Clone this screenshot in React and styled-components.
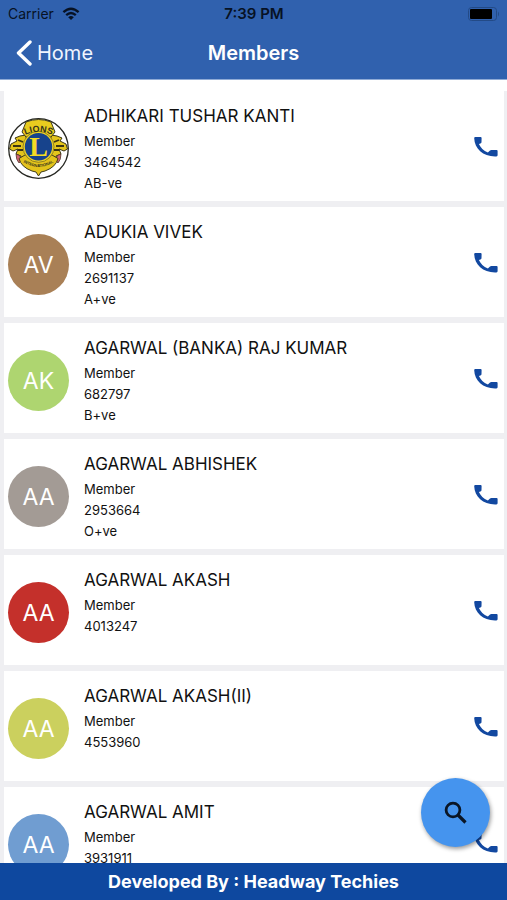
import React from "react";
import styled, { createGlobalStyle } from "styled-components";

const members = [
  { name: "ADHIKARI TUSHAR KANTI", id: "3464542", blood: "AB-ve", emblem: true },
  { name: "ADUKIA VIVEK", id: "2691137", blood: "A+ve", initials: "AV", color: "#a98056" },
  { name: "AGARWAL (BANKA) RAJ KUMAR", id: "682797", blood: "B+ve", initials: "AK", color: "#aed570" },
  { name: "AGARWAL ABHISHEK", id: "2953664", blood: "O+ve", initials: "AA", color: "#a39b95" },
  { name: "AGARWAL AKASH", id: "4013247", initials: "AA", color: "#c4302b" },
  { name: "AGARWAL AKASH(II)", id: "4553960", initials: "AA", color: "#cbd05e" },
  { name: "AGARWAL AMIT", id: "3931911", initials: "AA", color: "#709dd1" },
];

const GlobalStyle = createGlobalStyle`
  * { box-sizing: border-box; }
  body { margin: 0; background: #fff; font-family: Inter, "Liberation Sans", sans-serif; color: #111; }
  button { font: inherit; border: 0; padding: 0; background: none; cursor: pointer; }
`;

const Screen = styled.div`
  height: 100vh;
  display: flex;
  flex-direction: column;
`;

const Header = styled.header`
  flex: none;
  background: #3061ae;
  border-bottom: 1px solid #8fabd6;
`;

const Bar = styled.div`
  display: grid;
  grid-template-columns: 1fr auto 1fr;
  align-items: center;
`;

const StatusBar = styled(Bar)`
  height: 27px;
  padding: 0 7px 0 8px;
  font-size: 14px;
  color: #071224;
`;

const Carrier = styled.div`
  display: flex;
  align-items: center;
  gap: 8px;
`;

const Clock = styled.time`
  font-size: 15px;
  font-weight: 600;
`;

const Battery = styled.svg`
  justify-self: end;
`;

const NavBar = styled(Bar)`
  height: 52px;
  padding: 0 16px;
  color: #fff;
`;

const BackLink = styled.a`
  display: flex;
  align-items: center;
  gap: 5px;
  color: #f0f5ff;
  font-size: 20px;
  text-decoration: none;
`;

const Title = styled.h1`
  margin: 0;
  font-size: 20px;
  font-weight: 600;
`;

const ListArea = styled.main`
  flex: 1;
  min-height: 0;
  padding-top: 11px;
  display: flex;
  flex-direction: column;
`;

const MemberList = styled.ul`
  flex: 1;
  min-height: 0;
  margin: 0;
  padding: 0 3px 0 4px;
  overflow: hidden;
  list-style: none;
  background: #efeff2;
`;

const Card = styled.li`
  display: flex;
  align-items: center;
  height: 110px;
  margin-bottom: 6px;
  padding: 4px 6px 0 4px;
  background: #fff;
`;

const Avatar = styled.div`
  flex: none;
  display: flex;
  align-items: center;
  justify-content: center;
  width: 61px;
  height: 61px;
  border-radius: 50%;
  background: ${(p) => p.$color};
  color: #fff;
  font-size: 23px;
  line-height: 30px;
`;

const Initials = styled.span`
  padding-top: 2px;
`;

const Details = styled.div`
  flex: 1;
  align-self: flex-start;
  margin-left: 15px;
  padding-top: 9px;
`;

const Name = styled.h2`
  margin: 0 0 3px;
  font-size: 17px;
  font-weight: 400;
  line-height: 24px;
`;

const Line = styled.p`
  margin: 0;
  font-size: 13px;
  line-height: 21px;
`;

const CallButton = styled.button`
  flex: none;
  display: flex;
  padding-bottom: 2px;
  color: #1248a0;
`;

const SearchButton = styled.button`
  position: fixed;
  right: 17px;
  bottom: 53px;
  display: grid;
  place-items: center;
  width: 69px;
  height: 69px;
  border-radius: 50%;
  background: #4594ee;
  color: #0a1626;
  box-shadow: 1px 2px 4px rgba(0, 0, 0, 0.4);
`;

const Footer = styled.footer`
  flex: none;
  height: 37px;
  background: #0e489f;
  color: #fff;
  font-size: 18px;
  font-weight: 700;
  line-height: 37px;
  text-align: center;
`;

const WifiIcon = () => (
  <svg width="18" height="14" viewBox="0 0 18 14" fill="none" stroke="currentColor" strokeWidth="2.3" aria-hidden="true">
    <path d="M1.4 5.2Q9-1.8 16.6 5.2M4.2 8.2Q9 3.8 13.8 8.2" />
    <path d="M9 13 6.2 10.2Q9 7.8 11.8 10.2Z" fill="currentColor" stroke="none" />
  </svg>
);

const BatteryIcon = () => (
  <Battery width="32" height="14" viewBox="0 0 32 14" aria-label="Battery" role="img">
    <rect x="0.5" y="0.5" width="28" height="13" rx="3" fill="none" stroke="#234a86" />
    <rect x="2" y="2" width="22" height="10" rx="1" fill="#000" />
    <path d="M30 4.5Q32 7 30 9.5Z" fill="#234a86" />
  </Battery>
);

const BackIcon = () => (
  <svg width="16" height="26" viewBox="0 0 16 26" fill="none" stroke="#fff" strokeWidth="3.4" strokeLinecap="round" strokeLinejoin="round" aria-hidden="true">
    <path d="M14 2 2.5 13 14 24" />
  </svg>
);

const PhoneIcon = () => (
  <svg width="24" height="20" viewBox="0 0 24 20" fill="currentColor" aria-hidden="true">
    <path d="M1.2 0H6.6Q7.600 0 7.600 1L7.500 5.300Q7.400 6.300 6.400 6.500L4.900 6.900C6.500 10.500 9.500 13.500 13.900 15.400L16 13.500Q16.600 13 17.400 13H22.600Q23.600 13 23.600 14V18.300Q23.600 19.400 22.400 19.400C9.500 20 .6 12 .2 1.200Q.2 0 1.200 0Z" />
  </svg>
);

const SearchIcon = () => (
  <svg width="24" height="24" viewBox="0 0 24 24" fill="none" stroke="currentColor" strokeWidth="2.800" aria-hidden="true">
    <circle cx="9" cy="9" r="6.900" />
    <path d="M14 14 21.500 21.500" strokeWidth="3.200" />
  </svg>
);

const LionsEmblem = () => (
  <svg width="61" height="61" viewBox="0 0 61 61" role="img" aria-label="Lions International">
    <defs>
      <path id="upperArc" d="M14 18.500Q30.500 9.500 47 18.500" />
      <path id="lowerArc" d="M13 42.500Q30.500 55.500 48 42.500" />
    </defs>
    <circle cx="30.500" cy="30.500" r="29.800" fill="#fff" stroke="#262722" strokeWidth="1.300" />
    <g fill="#e4c51c" stroke="#3a3515" strokeWidth="1" strokeLinejoin="round">
      <path id="lionHead" d="M18 17 12 18 7 20 9 23 3 26 1.500 31 5 33 10 31 8 36 13 38 12 42 19 40Z" />
      <path d="M43 17 49 18 54 20 52 23 58 26 59.500 31 56 33 51 31 53 36 48 38 49 42 42 40Z" />
    </g>
    <path d="M10 22 15 24M5 28 13 28M10 32 15 32M51 22 46 24M56 28 48 28M51 32 46 32" stroke="#3b3414" strokeWidth="1.800" />
    <path d="M8 36Q12 36 14 42L11 45Q8 42 8 36ZM53 36Q49 36 47 42L50 45Q53 42 53 36Z" fill="#cf6672" stroke="#403020" strokeWidth=".7" />
    <path d="M14 14 18 4Q30.500 -1 43 4L47 14 43 19H18Z" fill="#e9cc1f" stroke="#403d1a" strokeWidth="1" />
    <path d="M11 40.500 17 37H44L50 40.500Q48 49 37 53L33 54 30.500 58 28 54 24 53Q13 49 11 40.500Z" fill="#e3c31b" stroke="#403d1a" strokeWidth="1" />
    <circle cx="30.500" cy="28.800" r="15.500" fill="#efd324" stroke="#57501c" strokeWidth=".6" />
    <circle cx="30.500" cy="28.800" r="13.700" fill="#17438c" />
    <text fontFamily="Liberation Sans, sans-serif" fontSize="9" fontWeight="700" fill="#34331d" textAnchor="middle">
      <textPath href="#upperArc" startOffset="50%">LIONS</textPath>
    </text>
    <text fontFamily="Liberation Sans, sans-serif" fontSize="4" fontWeight="700" fill="#34331d" textAnchor="middle">
      <textPath href="#lowerArc" startOffset="50%">INTERNATIONAL</textPath>
    </text>
    <text x="30.500" y="38" fontFamily="Liberation Serif, serif" fontSize="28" fontWeight="700" fill="#f5dc25" textAnchor="middle">L</text>
  </svg>
);

const MemberCard = ({ member }) => (
  <Card>
    <Avatar $color={member.color || "#fff"}>
      {member.emblem ? <LionsEmblem /> : <Initials>{member.initials}</Initials>}
    </Avatar>
    <Details>
      <Name>{member.name}</Name>
      <Line>Member</Line>
      <Line>{member.id}</Line>
      {member.blood && <Line>{member.blood}</Line>}
    </Details>
    <CallButton type="button" aria-label={`Call ${member.name}`}>
      <PhoneIcon />
    </CallButton>
  </Card>
);

export default function App() {
  return (
    <Screen>
      <GlobalStyle />
      <Header>
        <StatusBar>
          <Carrier>Carrier <WifiIcon /></Carrier>
          <Clock>7:39 PM</Clock>
          <BatteryIcon />
        </StatusBar>
        <NavBar>
          <BackLink href="#home"><BackIcon />Home</BackLink>
          <Title>Members</Title>
        </NavBar>
      </Header>
      <ListArea>
        <MemberList>
          {members.map((member) => <MemberCard key={member.id} member={member} />)}
        </MemberList>
      </ListArea>
      <SearchButton type="button" aria-label="Search members"><SearchIcon /></SearchButton>
      <Footer>Developed By : Headway Techies</Footer>
    </Screen>
  );
}
